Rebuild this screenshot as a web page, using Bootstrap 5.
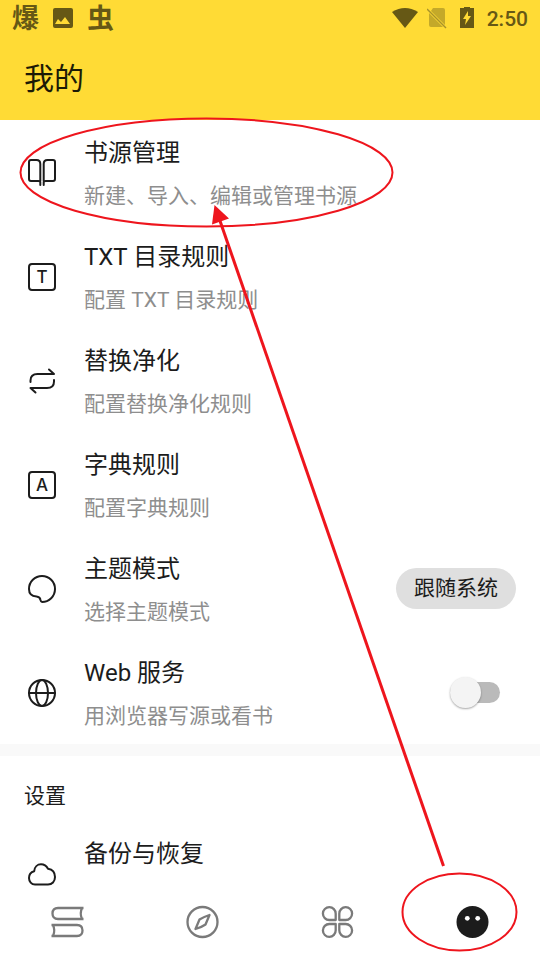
<!DOCTYPE html>
<html lang="zh-CN">
<head>
<meta charset="utf-8">
<meta name="viewport" content="width=device-width, initial-scale=1">
<title>我的</title>
<link href="https://cdn.jsdelivr.net/npm/bootstrap@5.3.0/dist/css/bootstrap.min.css" rel="stylesheet">
<style>
body { font-family: Roboto, "Noto Sans CJK SC", sans-serif; color: #1c1c1c; background: #fff; }
svg { display: block; flex: none; }
.app-top { background: #ffdb35; }
.status-bar { color: #665815; height: 38px; padding: 0 12px; }
.status-glyph { font-size: 27px; line-height: 36px; font-weight: 700; }
.status-time { font-size: 21px; line-height: 36px; font-weight: 500; }
.page-title { font-size: 30px; line-height: 82px; font-weight: 400; color: #1c1a06; padding: 0 24px; }
.app-main { min-height: 0; scrollbar-width: none; }
.pref-row { min-height: 104px; padding: 0 24px; gap: 24px; color: #1c1c1c; background: #fff; }
.pref-icon { width: 36px; height: 36px; fill: none; stroke: #1c1c1c; stroke-width: 2; stroke-linecap: round; stroke-linejoin: round; }
.pref-icon text { font: 500 17px Inter, sans-serif; fill: #1c1c1c; stroke: none; text-anchor: middle; }
.pref-text { padding-top: 3px; }
.pref-name { font-size: 24px; line-height: 32px; }
.pref-note { font-size: 21px; line-height: 28px; margin-top: 13px; color: #8e8e8e; }
.mode-btn { font-size: 21px; line-height: 41px; padding: 0 18px; color: #1c1c1c; background: #dfdfdf; }
.pref-switch { appearance: none; width: 50px; height: 21px; margin: 0 16px 0 0; border-radius: 11px; background: #bababa; display: flex; align-items: center; }
.pref-switch::before { content: ""; flex: none; width: 31px; height: 31px; border-radius: 50%; background: #f4f4f4; box-shadow: 0 1px 2px rgba(0,0,0,.35); }
.pref-switch:checked::before { margin-left: 19px; }
.divider-band { height: 12px; background: #f9f9f9; flex: none; }
.group-title { font-size: 21px; line-height: 28px; font-weight: 400; padding: 26px 24px 11px; }
.bottom-nav { height: 72px; padding-bottom: 4px; background: #fff; flex: none; }
.bottom-nav svg { width: 36px; height: 36px; fill: none; stroke: #7a7a7a; stroke-width: 2.300; stroke-linejoin: round; }
.marks { pointer-events: none; fill: none; stroke: #ee151d; }
</style>
<script src="https://cdn.jsdelivr.net/npm/bootstrap@5.3.0/dist/js/bootstrap.bundle.min.js"></script>
</head>
<body>
<div class="vh-100 d-flex flex-column position-relative overflow-hidden">
  <header class="app-top">
    <div class="status-bar d-flex align-items-center justify-content-between">
      <div class="d-flex align-items-center">
        <span class="status-glyph">爆</span>
        <svg class="mx-2" width="32" height="24" viewBox="0 0 32 24"><path fill="currentColor" fill-rule="evenodd" d="M8 1h16q2 0 2 2v16q0 2-2 2H8q-2 0-2-2V3q0-2 2-2Zm0 16h15l-5-7-4 5-3-3Z"/></svg>
        <span class="status-glyph">虫</span>
      </div>
      <div class="d-flex align-items-center">
        <svg width="28" height="24" viewBox="0 0 28 24"><path fill="currentColor" d="M1 5Q14-3 27 5L14 21Z"/></svg>
        <svg class="ms-2" width="20" height="24" viewBox="0 0 20 24"><path fill="#c4a929" d="M6 1h10q2 0 2 2v15L4 4ZM2 6l14 14H4q-2 0-2-2Z"/><path stroke="#a8912a" stroke-width="1.500" d="m0 2 19 19"/></svg>
        <svg class="ms-2 me-2" width="24" height="24" viewBox="0 0 24 24"><path fill="currentColor" fill-rule="evenodd" d="M9-1h6v2h4v20H5V1h4Zm4 5-5 8h3l-1 6 6-9h-3Z"/></svg>
        <span class="status-time">2:50</span>
      </div>
    </div>
    <h1 class="page-title m-0">我的</h1>
  </header>

  <main class="app-main flex-grow-1 overflow-auto">
    <a href="#sources" class="pref-row d-flex align-items-center text-decoration-none">
      <svg class="pref-icon" viewBox="0 0 36 36"><path d="M16.300 31v-3q0-1-2-1H7q-2 0-2-2V8q0-2 2-2h5.500q3.800 0 3.800 4v17M19.700 31v-3q0-1 2-1H29q2 0 2-2V8q0-2-2-2h-5.500q-3.800 0-3.800 4v17"/></svg>
      <span class="pref-text"><span class="pref-name d-block">书源管理</span><span class="pref-note d-block">新建、导入、编辑或管理书源</span></span>
    </a>
    <a href="#toc" class="pref-row d-flex align-items-center text-decoration-none">
      <svg class="pref-icon" viewBox="0 0 36 36"><rect x="5" y="6" width="26" height="26" rx="3"/><text x="18" y="25">T</text></svg>
      <span class="pref-text"><span class="pref-name d-block">TXT 目录规则</span><span class="pref-note d-block">配置 TXT 目录规则</span></span>
    </a>
    <a href="#replace" class="pref-row d-flex align-items-center text-decoration-none">
      <svg class="pref-icon" viewBox="0 0 36 36"><path d="M6.500 20v-1.500q0-6.500 7-6.500H30l-5-4.500M30 18v1.500q0 6.500-7 6.500H6.500l5 4.500"/></svg>
      <span class="pref-text"><span class="pref-name d-block">替换净化</span><span class="pref-note d-block">配置替换净化规则</span></span>
    </a>
    <a href="#dict" class="pref-row d-flex align-items-center text-decoration-none">
      <svg class="pref-icon" viewBox="0 0 36 36"><rect x="5" y="6" width="26" height="26" rx="3"/><text x="18" y="25">A</text></svg>
      <span class="pref-text"><span class="pref-name d-block">字典规则</span><span class="pref-note d-block">配置字典规则</span></span>
    </a>
    <div class="pref-row d-flex align-items-center">
      <svg class="pref-icon" viewBox="0 0 36 36"><path d="M18 32A13 13 0 1 0 5 19Q5 26 12.500 26.500Q16 26.800 16.500 30Q17 32 18 32Z"/></svg>
      <span class="pref-text flex-grow-1"><span class="pref-name d-block" id="mode-name">主题模式</span><span class="pref-note d-block">选择主题模式</span></span>
      <button type="button" class="mode-btn border-0 rounded-pill" aria-describedby="mode-name">跟随系统</button>
    </div>
    <div class="pref-row d-flex align-items-center">
      <svg class="pref-icon" viewBox="0 0 36 36"><circle cx="18" cy="19" r="13"/><ellipse cx="18" cy="19" rx="6" ry="13"/><path d="M5 19h26"/></svg>
      <label class="pref-text flex-grow-1" for="web"><span class="pref-name d-block">Web 服务</span><span class="pref-note d-block">用浏览器写源或看书</span></label>
      <input class="pref-switch" type="checkbox" role="switch" id="web">
    </div>
    <div class="divider-band"></div>
    <h2 class="group-title m-0">设置</h2>
    <a href="#backup" class="pref-row d-flex align-items-center text-decoration-none">
      <svg class="pref-icon" viewBox="0 0 36 36"><path d="M11 29.500C7.500 29.500 5 26.500 5 23C5 19.500 7 17 10.200 16.200C10.500 12 13.500 9.300 17 9.300C20.500 9.300 22.500 11 24 13.800C28 14.500 31 17.500 31 22C31 26.500 28 29.500 24 29.500Z"/></svg>
      <span class="pref-text"><span class="pref-name d-block">备份与恢复</span><span class="pref-note d-block">&nbsp;</span></span>
    </a>
  </main>

  <nav class="bottom-nav row g-0 align-items-center" aria-label="主导航">
    <a href="#shelf" class="col d-flex justify-content-center" aria-label="书架"><svg viewBox="0 0 36 36"><path d="M33.500 4H8Q2.500 4 2.500 9.500T8 15h25.500M32 4q-2.500 5.500 0 11M1.500 21H27q5.500 0 5.500 5.500T27 32H1.500M3 21q2.500 5.500 0 11"/></svg></a>
    <a href="#discover" class="col d-flex justify-content-center" aria-label="发现"><svg viewBox="0 0 36 36"><circle cx="17.500" cy="18" r="15"/><path d="m24.500 11-4 9.500Q17 23 10.500 25l4-9.500Q18.500 13 24.500 11Z"/></svg></a>
    <a href="#feeds" class="col d-flex justify-content-center" aria-label="订阅"><svg viewBox="0 0 36 36"><path d="M15.700 16V9.700A6.400 6.400 0 1 0 9.300 16ZM19.300 16V9.700A6.400 6.400 0 1 1 25.700 16ZM15.700 20v6.300A6.400 6.400 0 1 1 9.300 20ZM19.300 20v6.300A6.400 6.400 0 1 0 25.700 20Z"/></svg></a>
    <a href="#me" class="col d-flex justify-content-center" aria-label="我的" aria-current="page"><svg viewBox="0 0 36 36"><circle cx="17.500" cy="18" r="16" fill="#1c1c1c" stroke="none"/><g fill="#fff" stroke="none"><circle cx="12.300" cy="14.300" r="2.400"/><circle cx="22.700" cy="14.300" r="2.400"/></g></svg></a>
  </nav>

  <svg class="marks position-absolute top-0 start-0 w-100 h-100" viewBox="0 0 540 960" aria-hidden="true">
    <ellipse cx="206.500" cy="172.500" rx="186" ry="54" stroke-width="2"/>
    <ellipse cx="459.500" cy="912" rx="57" ry="38.500" stroke-width="2"/>
    <path d="M443.500 866 219 218" stroke-width="3"/>
    <path d="m214.500 205-2.500 19.500 17-6Z" fill="#ee151d" stroke="none"/>
  </svg>
</div>
</body>
</html>
